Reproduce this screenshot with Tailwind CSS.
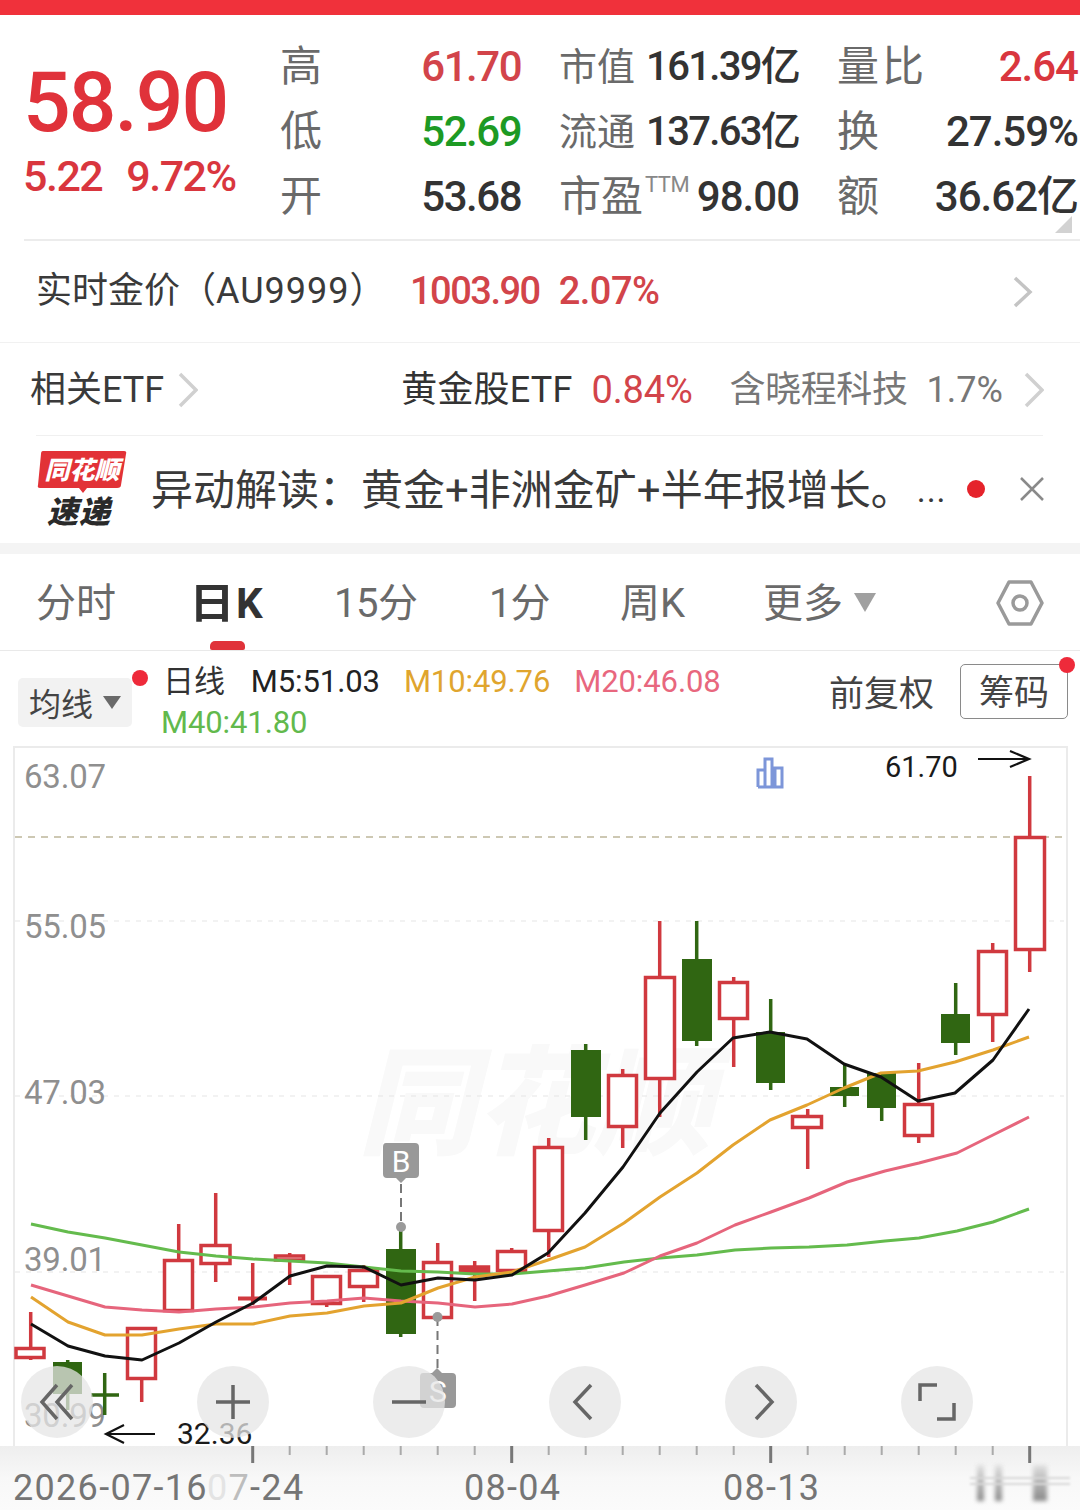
<!DOCTYPE html>
<html lang="zh-CN">
<head>
  <meta charset="UTF-8" />
  <title>K线</title>
  <meta name="viewport" content="width=device-width, initial-scale=1.0" />
  <script src="https://cdn.jsdelivr.net/npm/@tailwindcss/browser@4"></script>
</head>
<body class="bg-white text-[#333] [font-family:Roboto,'Noto_Sans_CJK_SC',sans-serif]">
  <div class="relative w-[1080px] h-[1510px] overflow-hidden">
    <div class="h-[15px] bg-[#f0313b]"></div>

    <!-- quote -->
    <section class="relative h-[226px] ml-[24px] border-b-2 border-[#ececec] flex">
      <div class="w-[257px] -ml-px pt-[41px]">
        <div class="text-[84px] leading-[94px] font-medium text-[#e0323a] tracking-[-2px]">58.90</div>
        <div class="flex gap-[24px] pt-[3px] text-[43px] leading-[46px] font-medium text-[#d9363e] tracking-[-1.5px]">
          <span>5.22</span><span>9.72%</span>
        </div>
      </div>
      <div class="grid grid-cols-[141px_100px_38px_240px_38px_241px] grid-rows-[65px_65px_65px] pt-[19px] items-center text-[42px] leading-none">
        <span class="text-[#6a6a6a]">高</span>
        <span class="text-right text-[#d2444a] tracking-[-1.5px] font-medium">61.70</span>
        <span></span>
        <div class="flex justify-between items-center">
          <span class="text-[38px] text-[#6a6a6a]">市值</span>
          <span class="text-[40px] text-[#333] font-medium tracking-[-1.7px]">161.39亿</span>
        </div>
        <span></span>
        <div class="flex justify-between items-center">
          <span class="text-[#6a6a6a] tracking-[3px]">量比</span>
          <span class="text-[#d9363e] font-medium tracking-[-1px]">2.64</span>
        </div>

        <span class="text-[#6a6a6a]">低</span>
        <span class="text-right text-[#1d9a23] tracking-[-1.5px] font-medium">52.69</span>
        <span></span>
        <div class="flex justify-between items-center">
          <span class="text-[38px] text-[#6a6a6a]">流通</span>
          <span class="text-[40px] text-[#333] font-medium tracking-[-1.7px]">137.63亿</span>
        </div>
        <span></span>
        <div class="flex justify-between items-center">
          <span class="text-[#6a6a6a]">换</span>
          <span class="font-medium tracking-[-1px]">27.59%</span>
        </div>

        <span class="text-[#6a6a6a]">开</span>
        <span class="text-right tracking-[-1.5px] font-medium">53.68</span>
        <span></span>
        <div class="flex justify-between items-center">
          <span class="text-[#6a6a6a] flex items-start">市盈<span class="text-[22px] text-[#888] -mt-[2px] ml-[2px] tracking-[-0.5px]">TTM</span></span>
          <span class="font-medium tracking-[-1px]">98.00</span>
        </div>
        <span></span>
        <div class="flex justify-between items-center">
          <span class="text-[#6a6a6a]">额</span>
          <span class="font-medium tracking-[-1px]">36.62亿</span>
        </div>
      </div>
      <svg class="absolute left-[1031px] top-[201px]" width="18" height="18" viewBox="0 0 18 18"><polygon points="17,0 17,17 0,17" fill="#d2d2d2"/></svg>
    </section>

    <!-- gold -->
    <section class="h-[102px] border-b border-[#f1f1f1] flex items-center pl-[36px] pr-[47px] text-[36px]">
      <span class="w-[374px] text-[#3a3a3a] whitespace-nowrap -mt-[2px]">实时金价（<span class="tracking-[1px]">AU9999</span>）</span>
      <span class="text-[38px] font-medium text-[#d2444a] tracking-[-1.5px]">1003.90</span>
      <span class="ml-[19px] text-[38px] font-medium text-[#d2444a] tracking-[-0.5px]">2.07%</span>
      <svg class="ml-auto" width="20" height="32" viewBox="0 0 20 32" fill="none" stroke="#c4c4c4" stroke-width="3.5"><path d="M2 2 L17 16 L2 30"/></svg>
    </section>

    <!-- etf -->
    <section class="h-[92px] flex items-center pl-[30px] pr-[36px] text-[36px] pt-[2px]">
      <span class="text-[#3a3a3a]">相关ETF</span>
      <svg class="ml-[14px]" width="20" height="36" viewBox="0 0 20 36" fill="none" stroke="#d0d0d0" stroke-width="3.5"><path d="M2 2 L18 18 L2 34"/></svg>
      <span class="ml-[203px] text-[#333] tracking-[0.2px]">黄金股ETF</span>
      <span class="ml-[19px] text-[38px] text-[#d2444a] tracking-[-0.2px]">0.84%</span>
      <span class="ml-[37px] text-[#777] tracking-[-0.4px]">含晓程科技</span>
      <span class="ml-[19px] text-[#777]">1.7%</span>
      <svg class="ml-auto" width="20" height="36" viewBox="0 0 20 36" fill="none" stroke="#d0d0d0" stroke-width="3.5"><path d="M2 2 L18 18 L2 34"/></svg>
    </section>

    <!-- news -->
    <section class="relative h-[108px] flex items-center pl-[37px] pr-[35px] before:absolute before:left-[36px] before:right-[37px] before:top-0 before:h-px before:bg-[#f0f0f0]">
      <svg width="90" height="82" viewBox="0 0 90 82" class="mt-[2px] shrink-0">
        <path d="M6 2 H87 Q90 2 89 5 L84 36 Q84 39 80 39 H50 L46 44 L42 39 H3 Q0 39 1 36 L4 5 Q4 2 6 2 Z" fill="#e23237"/>
        <text x="45" y="30" text-anchor="middle" font-size="25" font-weight="900" font-style="italic" fill="#fff" font-family="Noto Sans CJK SC">同花顺</text>
        <text x="42" y="74" text-anchor="middle" font-size="31" font-weight="900" font-style="italic" fill="#2a2a2a" font-family="Noto Sans CJK SC" letter-spacing="1">速递</text>
      </svg>
      <span class="ml-[24px] mt-[2px] text-[42px] text-[#3a3a3a] whitespace-nowrap">异动解读：黄金+非洲金矿+半年报增长。</span>
      <span class="ml-[4px] mt-[2px] text-[34px] text-[#3a3a3a] tracking-[1px]">...</span>
      <span class="ml-[20px] w-[18px] h-[18px] rounded-full bg-[#e5232b] shrink-0"></span>
      <svg class="ml-auto shrink-0" width="26" height="26" viewBox="0 0 26 26" stroke="#8a8a8a" stroke-width="2.5"><path d="M2 2 L24 24 M24 2 L2 24"/></svg>
    </section>

    <div class="h-[11px] bg-[#f4f4f4]"></div>

    <!-- period tabs -->
    <section class="h-[97px] border-b border-[#e9e9e9] flex items-center text-[40px] text-[#6a6a6a] leading-none">
      <span class="ml-[36px] w-[81px] mt-[4px]">分时</span>
      <span class="relative ml-[74px] self-stretch flex items-center font-bold text-[#333] text-[42px] w-[71px]">
        <span class="scale-x-[1.08] w-[45px] pr-[3px] text-center mt-[4px]">日</span><span class="mt-[4px]">K</span>
        <span class="absolute left-[19px] bottom-0 w-[35px] h-[9px] rounded-t-[5px] rounded-b-[2px] bg-[#e0323a]"></span>
      </span>
      <span class="ml-[72px] w-[81px] whitespace-nowrap mt-[4px] tracking-[-0.5px]">15分</span>
      <span class="ml-[74px] w-[56px] whitespace-nowrap mt-[4px] tracking-[-1px]">1分</span>
      <span class="ml-[75px] w-[66px] whitespace-nowrap mt-[4px]">周K</span>
      <span class="ml-[77px] w-[80px] mt-[4px]">更多</span>
      <svg class="ml-[11px] mt-[2px]" width="22" height="20" viewBox="0 0 22 20"><polygon points="0,0 22,0 11,19" fill="#a0a0a0"/></svg>
      <svg class="ml-[120px] mt-[2px]" width="48" height="46" viewBox="0 0 48 46" fill="none" stroke="#9a9a9a" stroke-width="3.5"><path d="M13 2 H35 L46 23 L35 44 H13 L2 23 Z" stroke-linejoin="round"/><circle cx="24" cy="23" r="7"/></svg>
    </section>

    <!-- legend -->
    <section class="relative h-[95px] flex">
      <div class="ml-[18px] mt-[27px] w-[114px] h-[49px] rounded-[5px] bg-[#f2f2f2] flex items-center pl-[11px] text-[32px] text-[#444]">
        <span class="mt-[4px]">均线</span>
        <svg class="ml-[10px]" width="18" height="14" viewBox="0 0 18 14"><polygon points="0,0 18,0 9,13" fill="#6a6a6a"/></svg>
      </div>
      <span class="absolute left-[132px] top-[19px] w-[16px] h-[16px] rounded-full bg-[#ee2a3a]"></span>
      <div class="ml-[29px] pt-[10px] text-[31px] leading-[41px] tracking-[-0.1px]">
        <div class="flex whitespace-nowrap">
          <span class="text-[#333] ml-[2px]">日线</span>
          <span class="ml-[26px] text-[#222]">M5:51.03</span>
          <span class="ml-[24px] text-[#e0a52e]">M10:49.76</span>
          <span class="ml-[24px] text-[#e8677e]">M20:46.08</span>
        </div>
        <div class="text-[#62b94c]">M40:41.80</div>
      </div>
      <span class="absolute left-[829px] top-[21px] text-[35px] leading-[46px] text-[#444]">前复权</span>
      <div class="absolute left-[960px] top-[13px] w-[108px] h-[55px] rounded-[5px] border border-[#8a8a8a] flex items-center justify-center pt-[6px] text-[35px] text-[#444]">筹码</div>
      <span class="absolute left-[1059px] top-[6px] w-[16px] h-[16px] rounded-full bg-[#ee2a3a]"></span>
    </section>

    <!-- chart -->
    <section class="relative h-[700px] ml-[13px] mr-[12px] border-2 border-b-0 border-[#ebebeb]">
      <svg class="absolute -left-[15px] -top-[2px]" width="1080" height="702" viewBox="0 746 1080 702" font-family="Roboto, sans-serif">
        <text x="358" y="1145" font-size="118" font-weight="900" font-style="italic" fill="#f9f9f9" font-family="Noto Sans CJK SC">同花顺</text>
        <g stroke-dasharray="5 6" stroke-width="1.2" stroke="#e6e6e6">
          <path d="M15 921 H1064 M15 1096 H1064 M15 1272 H1064"/>
          <path d="M15 837 H1064" stroke="#bdb79a" stroke-dasharray="7 6" stroke-width="1.5"/>
        </g>
        <g font-size="33" fill="#8f8f8f" letter-spacing="-0.2">
          <text x="24" y="788">63.07</text>
          <text x="24" y="938">55.05</text>
          <text x="24" y="1104">47.03</text>
          <text x="24" y="1271">39.01</text>
          <text x="24" y="1427">30.99</text>
        </g>

        <!-- green candles -->
        <g fill="#306612" stroke="#306612" stroke-width="3.5">
          <path d="M67.7 1360 V1410 M104.7 1373 V1415 M91 1395 H119 M400.7 1230 V1337 M585.7 1044 V1140 M696.7 921 V1046 M770.7 999 V1090 M844.7 1064 V1107 M881.7 1073 V1121 M955.7 983 V1055" fill="none"/>
          <rect x="53" y="1362" width="29" height="32" stroke="none"/>
          <rect x="386" y="1249" width="30" height="85" stroke="none"/>
          <rect x="571" y="1050" width="30" height="67" stroke="none"/>
          <rect x="682" y="959" width="30" height="82" stroke="none"/>
          <rect x="756" y="1032" width="29" height="51" stroke="none"/>
          <rect x="830" y="1087" width="29" height="9" stroke="none"/>
          <rect x="867" y="1073" width="29" height="35" stroke="none"/>
          <rect x="941" y="1014" width="29" height="29" stroke="none"/>
        </g>
        <!-- red candles -->
        <g fill="#fff" stroke="#d0393f" stroke-width="3.5">
          <path fill="none" d="M30.7 1312 V1360 M141.7 1327 V1402 M178.7 1224 V1312 M215.7 1193 V1282 M252.7 1263 V1305 M289.7 1253 V1285 M326.7 1275 V1307 M363.7 1265 V1302 M437.7 1243 V1319 M474.7 1261 V1301 M511.7 1248 V1271 M548.7 1138 V1257 M622.7 1069 V1148 M659.7 921 V1117 M733.7 977 V1067 M807.7 1109 V1169 M918.7 1063 V1143 M992.7 943 V1042 M1029.7 776 V972"/>
          <rect x="16" y="1348.5" width="28" height="9"/>
          <rect x="127.5" y="1328.5" width="28" height="50"/>
          <rect x="164.5" y="1260.5" width="28" height="50"/>
          <rect x="201" y="1245.5" width="29" height="18"/>
          <path d="M238 1298.5 H267" stroke-width="4"/>
          <rect x="275.5" y="1256" width="28" height="4"/>
          <rect x="312.5" y="1276.5" width="28" height="27"/>
          <rect x="349.5" y="1270.5" width="28" height="16"/>
          <rect x="423.5" y="1262.5" width="28" height="55"/>
          <rect x="460.5" y="1267" width="28" height="5" fill="#d0393f"/>
          <rect x="497.5" y="1251.5" width="28" height="19"/>
          <rect x="534.5" y="1147.5" width="28" height="83"/>
          <rect x="608.5" y="1075.5" width="28" height="51"/>
          <rect x="645.5" y="977.5" width="29" height="101"/>
          <rect x="719.5" y="982.5" width="28" height="36"/>
          <rect x="792.5" y="1116.5" width="29" height="11"/>
          <rect x="904.5" y="1104.5" width="28" height="31"/>
          <rect x="978.5" y="951.5" width="28" height="63"/>
          <rect x="1015.5" y="837.5" width="29" height="112"/>
        </g>

        <!-- moving averages -->
        <g fill="none" stroke-width="3" stroke-linejoin="round">
          <polyline stroke="#64bb4d" points="31,1224 68,1232 105,1238 142,1245 179,1252 216,1256 253,1259 290,1261 327,1263 364,1267 401,1271 438,1272 475,1274 512,1274 548,1271 585,1268 624,1262 660,1258 697,1255 735,1250 771,1248 809,1247 847,1245 885,1241 919,1238 957,1231 993,1222 1029,1209"/>
          <polyline stroke="#e6657c" points="31,1285 68,1296 105,1307 142,1310 179,1312 216,1309 253,1307 290,1303 327,1301 364,1298 401,1301 438,1303 475,1307 512,1304 548,1296 585,1285 624,1273 660,1256 697,1243 735,1225 771,1212 809,1198 847,1182 885,1171 919,1163 957,1153 993,1135 1029,1117"/>
          <polyline stroke="#e3a32f" points="31,1297 68,1322 105,1335 142,1335 179,1329 216,1324 253,1324 290,1316 327,1313 364,1306 401,1303 438,1288 475,1277 512,1272 548,1260 585,1247 624,1223 660,1197 697,1173 733,1145 770,1120 807,1105 844,1088 881,1073 918,1071 955,1062 993,1050 1029,1037"/>
          <polyline stroke="#111" points="31,1324 68,1346 105,1356 142,1360 179,1343 216,1322 253,1303 290,1276 327,1266 364,1267 401,1285 438,1278 475,1280 512,1275 548,1253 585,1213 623,1167 660,1113 697,1072 733,1038 770,1032 807,1039 844,1064 881,1077 918,1101 955,1093 993,1060 1029,1009"/>
        </g>

        <!-- trade marks -->
        <path d="M401 1184 V1225 M437.5 1317 V1370" stroke="#777" stroke-width="2" stroke-dasharray="9 5" fill="none"/>
        <circle cx="401" cy="1227" r="5" fill="#9a9a9a"/>
        <circle cx="437.5" cy="1317" r="5" fill="#9a9a9a"/>
        <path d="M386 1143 H415 Q419 1143 419 1147 V1174 Q419 1178 415 1178 H406 L401 1183 L396 1178 H387 Q383 1178 383 1174 V1147 Q383 1143 386 1143 Z" fill="#999"/>
        <text x="401" y="1172" text-anchor="middle" font-size="30" fill="#fff">B</text>
        <path d="M423 1373 H432 L437 1368 L442 1373 H452 Q456 1373 456 1377 V1404 Q456 1408 452 1408 H424 Q420 1408 420 1404 V1377 Q420 1373 423 1373 Z" fill="#999"/>
        <text x="438" y="1402" text-anchor="middle" font-size="30" fill="#fff">S</text>

        <!-- high / low -->
        <text x="885" y="777" font-size="29" fill="#1a1a1a">61.70</text>
        <path d="M978 759 H1029 M1010 751 L1029 759 L1010 767" stroke="#111" stroke-width="2.2" fill="none"/>
        <text x="177" y="1444" font-size="30" fill="#1a1a1a">32.36</text>
        <path d="M155 1434 H106 M124 1425 L106 1434 L124 1443" stroke="#111" stroke-width="2.2" fill="none"/>

        <g fill="none" stroke="#7d96d9" stroke-width="3">
          <path d="M758 787 H782 V768 H775 V787 M758 787 V770 H765 V787 M765 787 V759 H772 V787"/>
        </g>
      </svg>

      <!-- floating chart controls -->
      <div class="absolute left-[6px] top-[618px] flex gap-[104px]">
        <button class="w-[72px] h-[72px] rounded-full bg-[#e6e6e6]/75 flex items-center justify-center">
          <svg width="36" height="38" viewBox="0 0 36 38" fill="none" stroke="#666" stroke-width="3.5"><path d="M18 2 L3 19 L18 36 M33 2 L18 19 L33 36"/></svg>
        </button>
        <button class="w-[72px] h-[72px] rounded-full bg-[#e6e6e6]/75 flex items-center justify-center">
          <svg width="34" height="34" viewBox="0 0 34 34" stroke="#666" stroke-width="3.5"><path d="M0 17 H34 M17 0 V34"/></svg>
        </button>
        <button class="w-[72px] h-[72px] rounded-full bg-[#e6e6e6]/75 flex items-center justify-center">
          <svg width="34" height="34" viewBox="0 0 34 34" stroke="#666" stroke-width="3.5"><path d="M0 17 H34"/></svg>
        </button>
        <button class="w-[72px] h-[72px] rounded-full bg-[#e6e6e6]/75 flex items-center justify-center">
          <svg class="-ml-[5px]" width="22" height="38" viewBox="0 0 22 38" fill="none" stroke="#666" stroke-width="3.5"><path d="M19 2 L3 19 L19 36"/></svg>
        </button>
        <button class="w-[72px] h-[72px] rounded-full bg-[#e6e6e6]/75 flex items-center justify-center">
          <svg class="ml-[6px]" width="22" height="38" viewBox="0 0 22 38" fill="none" stroke="#666" stroke-width="3.5"><path d="M3 2 L19 19 L3 36"/></svg>
        </button>
        <button class="w-[72px] h-[72px] rounded-full bg-[#e6e6e6]/75 flex items-center justify-center">
          <svg width="38" height="38" viewBox="0 0 38 38" fill="none" stroke="#666" stroke-width="3.5"><path d="M2 18 V2 H19 M36 20 V36 H19"/></svg>
        </button>
      </div>
    </section>

    <!-- time axis -->
    <section class="relative h-[64px] bg-linear-to-b from-[#eeeeee] via-[#f8f8f8] to-[#fbfbfb]">
      <svg class="absolute left-0 top-0" width="1080" height="20" viewBox="0 1446 1080 20" stroke="#aaa" stroke-width="2" fill="none">
        <path d="M289.7 1446 V1455 M326.7 1446 V1455 M363.7 1446 V1455 M400.7 1446 V1455 M437.7 1446 V1455 M474.7 1446 V1455 M548.7 1446 V1455 M585.7 1446 V1455 M622.7 1446 V1455 M659.7 1446 V1455 M696.7 1446 V1455 M733.7 1446 V1455 M807.7 1446 V1455 M844.7 1446 V1455 M881.7 1446 V1455 M918.7 1446 V1455 M955.7 1446 V1455 M992.7 1446 V1455"/>
        <path d="M252.7 1446 V1463 M511.7 1446 V1463 M770.7 1446 V1463 M1029.7 1446 V1463" stroke="#777" stroke-width="3"/>
      </svg>
      <div class="relative flex pt-[21px] text-[36px] leading-[42px] text-[#757575] tracking-[1.3px] whitespace-nowrap">
        <span class="ml-[13px] w-[194px]">2026-07-16</span>
        <span class="w-[94px]"><span class="text-[#e4e4e4]">0</span><span class="text-[#bdbdbd]">7</span><span>-24</span></span>
        <span class="ml-[163px] w-[96px]">08-04</span>
        <span class="ml-[163px] w-[96px]">08-13</span>
      </div>
      <!-- smudged edge of the image -->
      <div class="absolute left-[977px] top-[19px] w-[7px] h-[36px] bg-linear-to-b from-[#e0e0e0] to-[#8a8a8a] blur-[2px]"></div>
      <div class="absolute left-[995px] top-[19px] w-[7px] h-[36px] bg-linear-to-b from-[#e0e0e0] to-[#8a8a8a] blur-[2px]"></div>
      <div class="absolute left-[1033px] top-[19px] w-[14px] h-[36px] bg-linear-to-b from-[#e0e0e0] to-[#8a8a8a] blur-[2px]"></div>
      <div class="absolute left-[970px] top-[31px] w-[100px] h-[2px] bg-[#d8d8d8] blur-[1px]"></div>
      <div class="absolute left-[970px] top-[37px] w-[100px] h-[2px] bg-[#d8d8d8] blur-[1px]"></div>
    </section>
  </div>
</body>
</html>
